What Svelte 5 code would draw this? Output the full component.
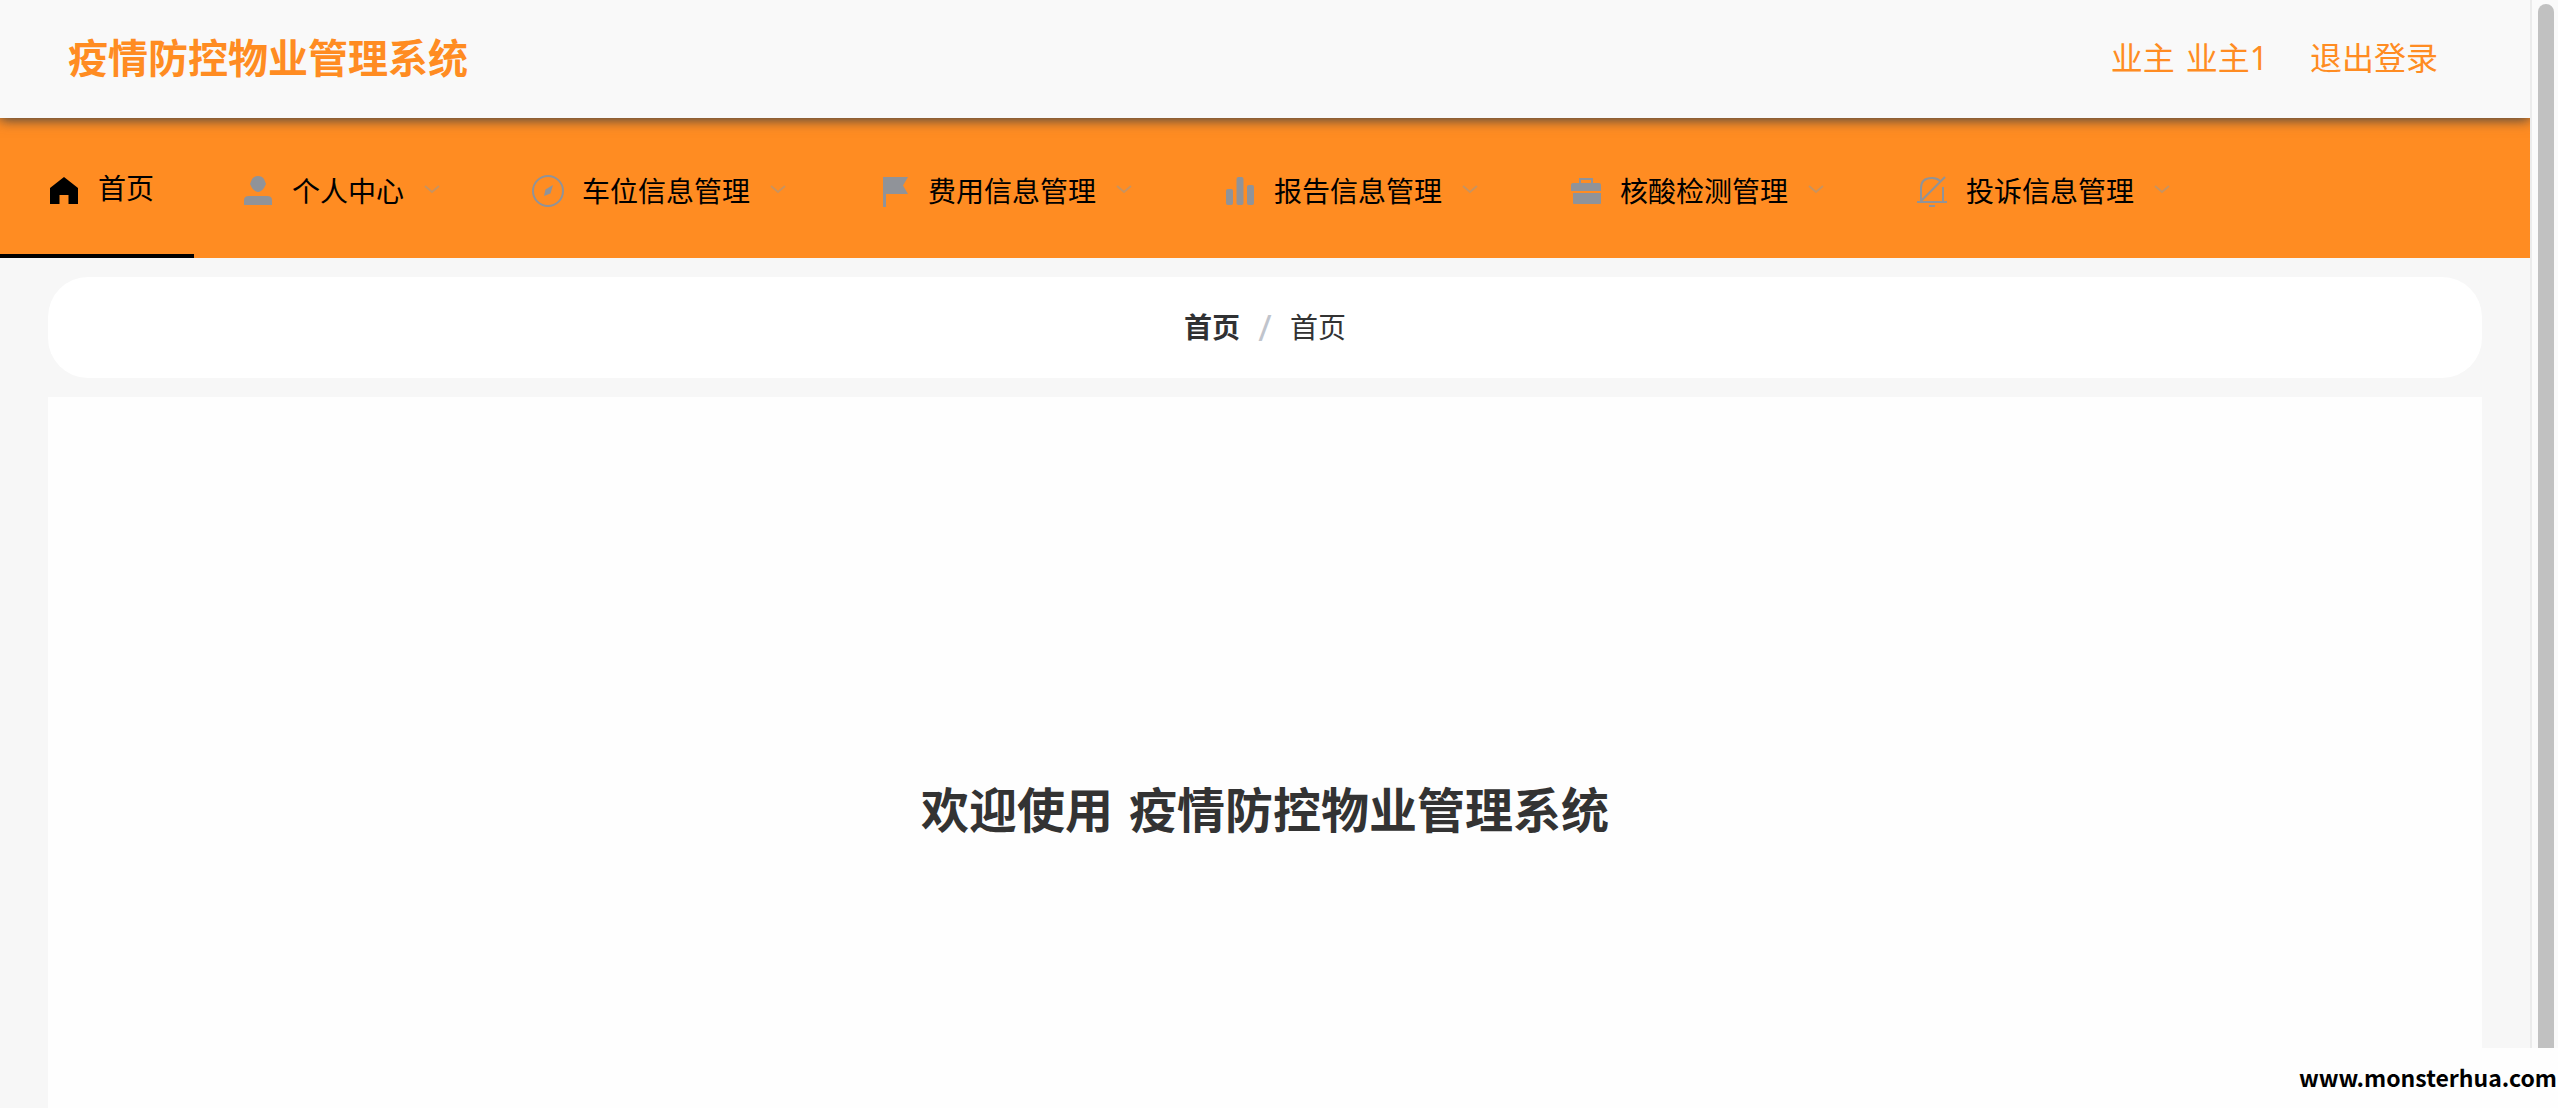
<script>
  const items = [
    { label: '首页', icon: 'home', active: true },
    { label: '个人中心', icon: 'user' },
    { label: '车位信息管理', icon: 'discover' },
    { label: '费用信息管理', icon: 'flag' },
    { label: '报告信息管理', icon: 'chart' },
    { label: '核酸检测管理', icon: 'case' },
    { label: '投诉信息管理', icon: 'bell' }
  ];
</script>

<div class="app">
  <div class="page">
    <header class="header">
      <h1>疫情防控物业管理系统</h1>
      <div class="account">
        <span class="who"><span>业主</span><span>业主1</span></span>
        <button type="button" class="logout">退出登录</button>
      </div>
    </header>

    <nav class="nav" aria-label="主菜单">
      <ul>
        {#each items as item}
          <li>
            <a href="#{item.icon}" class:active={item.active} aria-current={item.active ? 'page' : undefined}>
              <svg class="icon" viewBox="0 0 36 36" aria-hidden="true">
                {#if item.icon === 'home'}
                  <path d="M18 4 L32 15 V31 H22.500 V22 H13.500 V31 H4 V15 Z" />
                {:else if item.icon === 'user'}
                  <path d="M18 3 Q22 3 24 6 L26 11 L24 15 Q21 19 18 19 Q15 19 12 15 L10 11 L12 6 Q14 3 18 3 Z" />
                  <path d="M4 32 V27 Q4 23 9 23 H27 Q32 23 32 27 V32 Z" />
                {:else if item.icon === 'discover'}
                  <circle class="line" cx="18" cy="18" r="15" />
                  <path d="M23 12 L20.500 20.500 L14 23 L15.500 16.500 Z" />
                {:else if item.icon === 'flag'}
                  <path d="M7 4 H32 L27 12.500 L32 21 H10 V34 H7 Z" />
                {:else if item.icon === 'chart'}
                  <rect x="4" y="16" width="7" height="16" rx="2" />
                  <rect x="14.500" y="4" width="7" height="28" rx="2" />
                  <rect x="25" y="12" width="7" height="20" rx="2" />
                {:else if item.icon === 'case'}
                  <path class="line" d="M12 11 V6 H24 V11" />
                  <path d="M3 12 Q3 10 5 10 H31 Q33 10 33 12 V18 H3 Z M5 20 H33 V30 Q33 31 32 31 H6 Q5 31 5 30 Z" />
                {:else}
                  <path class="line" d="M7 29 V15 Q7 5 18 5 Q23 5 26 8 M29 14 V29 M3 29 H33 M31 4 L7 28 M15 33 H21" />
                {/if}
              </svg>
              <span class="label">{item.label}</span>
              {#if !item.active}
                <svg class="arrow" viewBox="0 0 24 24" aria-hidden="true"><path d="M5 7 L12 13 L19 7" /></svg>
              {/if}
            </a>
          </li>
        {/each}
      </ul>
    </nav>

    <main>
      <div class="crumbs" aria-label="面包屑">
        <a href="#home">首页</a>
        <span class="slash">/</span>
        <span>首页</span>
      </div>
      <section class="card">
        <h2><span>欢迎使用</span><span>疫情防控物业管理系统</span></h2>
      </section>
    </main>
  </div>
  <div class="scroll"><div class="thumb"></div></div>
  <div class="mark">www.monsterhua.com</div>
</div>

<style>
  :global(body) { margin: 0; background: #f7f7f7; }
  .app {
    position: relative;
    display: flex;
    height: 100vh;
    overflow: hidden;
    font-family: "Noto Sans", "Noto Sans CJK SC", sans-serif;
    color: #333;
  }
  .page { flex: 1; min-width: 0; display: flex; flex-direction: column; overflow: hidden; }
  .header {
    position: relative;
    z-index: 1;
    flex: none;
    display: flex;
    align-items: center;
    justify-content: space-between;
    box-sizing: border-box;
    height: 118px;
    padding: 0 92px 2px 68px;
    background: #f9f9f9;
    box-shadow: 0 2px 12px #444;
    color: #ff8c22;
  }
  h1 { margin: 0; font-size: 40px; line-height: 60px; font-weight: 700; }
  .account { display: flex; align-items: center; gap: 42px; font-size: 32px; line-height: 48px; }
  .who { display: flex; gap: 11px; }
  .logout { padding: 0; border: 0; background: none; color: inherit; font: inherit; cursor: pointer; }
  .nav { flex: none; background: #ff8c22; }
  ul { display: flex; margin: 0; padding: 0; list-style: none; }
  .nav a {
    display: flex;
    align-items: center;
    box-sizing: border-box;
    height: 140px;
    padding: 9px 40px 0;
    border-bottom: 4px solid transparent;
    color: #000;
    font-size: 28px;
    line-height: 40px;
    text-decoration: none;
    white-space: nowrap;
  }
  .nav a.active { border-color: #000; }
  .icon { width: 36px; height: 36px; margin: 0 16px 0 6px; fill: #909399; }
  .active .icon { fill: #000; }
  .active .label { padding-bottom: 5px; }
  .icon .line { fill: none; stroke: #909399; stroke-width: 2; }
  .arrow { width: 24px; height: 24px; margin-left: 16px; fill: none; stroke: #c9935f; stroke-width: 2; }
  main { flex: 1; display: flex; flex-direction: column; gap: 19px; padding: 19px 48px 0; background: #f7f7f7; }
  .crumbs {
    display: flex;
    align-items: center;
    justify-content: center;
    gap: 18px;
    padding: 30px;
    border-radius: 40px;
    background: #fff;
    font-size: 28px;
    line-height: 41px;
  }
  .crumbs a { color: #303133; font-weight: 700; text-decoration: none; }
  .slash { width: 14px; text-align: center; color: #c0c4cc; font-size: 36px; }
  .card { flex: 1; padding-top: 383px; background: #fefefe; }
  h2 { display: flex; justify-content: center; gap: 16px; margin: 0; font-size: 48px; line-height: 60px; font-weight: 700; }
  .scroll {
    flex: none;
    box-sizing: border-box;
    width: 28px;
    padding: 4px 4px 0 6px;
    border-left: 2px solid #ebebeb;
    background: #fafafa;
  }
  .thumb { height: 100%; border-radius: 8px; background: #c1c1c1; }
  .mark {
    position: absolute;
    right: 0;
    bottom: 0;
    padding: 9px 1px 11px;
    background: #fefefe;
    color: #000;
    font: 700 23px/40px "Noto Sans CJK SC", sans-serif;
  }
</style>
